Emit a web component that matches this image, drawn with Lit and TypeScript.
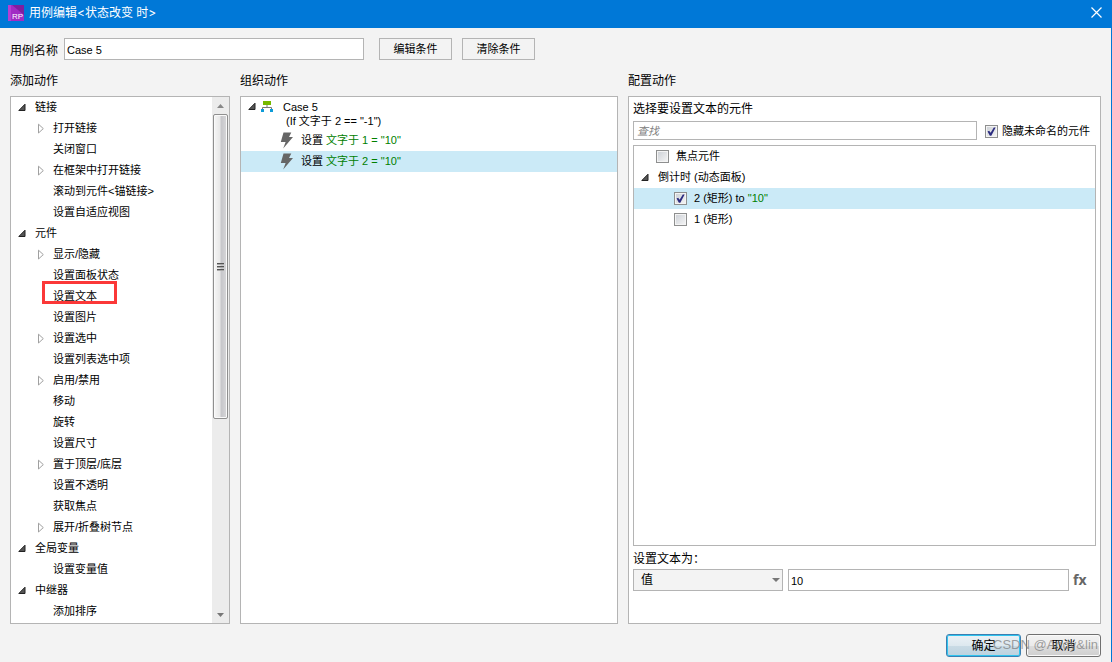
import { LitElement, html, css, svg, nothing } from "lit";
import { customElement, property, state } from "lit/decorators.js";
import { classMap } from "lit/directives/class-map.js";

type ActionNode = {
  label: string;
  level: 0 | 1;
  twisty?: "open" | "closed";
  marked?: boolean;
};

const ACTIONS: ActionNode[] = [
  { label: "链接", level: 0, twisty: "open" },
  { label: "打开链接", level: 1, twisty: "closed" },
  { label: "关闭窗口", level: 1 },
  { label: "在框架中打开链接", level: 1, twisty: "closed" },
  { label: "滚动到元件<锚链接>", level: 1 },
  { label: "设置自适应视图", level: 1 },
  { label: "元件", level: 0, twisty: "open" },
  { label: "显示/隐藏", level: 1, twisty: "closed" },
  { label: "设置面板状态", level: 1 },
  { label: "设置文本", level: 1, marked: true },
  { label: "设置图片", level: 1 },
  { label: "设置选中", level: 1, twisty: "closed" },
  { label: "设置列表选中项", level: 1 },
  { label: "启用/禁用", level: 1, twisty: "closed" },
  { label: "移动", level: 1 },
  { label: "旋转", level: 1 },
  { label: "设置尺寸", level: 1 },
  { label: "置于顶层/底层", level: 1, twisty: "closed" },
  { label: "设置不透明", level: 1 },
  { label: "获取焦点", level: 1 },
  { label: "展开/折叠树节点", level: 1, twisty: "closed" },
  { label: "全局变量", level: 0, twisty: "open" },
  { label: "设置变量值", level: 1 },
  { label: "中继器", level: 0, twisty: "open" },
  { label: "添加排序", level: 1 },
];

const twistyIcon = (kind?: "open" | "closed") => html`
  <svg width="10" height="11" viewBox="0 0 10 11" aria-hidden="true">
    ${kind === "open"
      ? svg`<path d="M7 2.2V8.5H0.8Z" fill="#555" stroke="#222" stroke-width="1"/>`
      : kind === "closed"
        ? svg`<path d="M2.5 1.2V10L7.3 5.6Z" fill="#fff" stroke="#a0a0a0" stroke-width="1"/>`
        : nothing}
  </svg>`;

const boltIcon = html`
  <svg width="14" height="17" viewBox="0 0 14 17" aria-hidden="true">
    <path d="M3.5 0.5H11.3L9 5H13L3.2 16.5L5.6 10H0.8Z" fill="#666" />
  </svg>`;

const caseIcon = html`
  <svg width="12" height="12" viewBox="0 0 12 12" aria-hidden="true">
    <path d="M2 0H10V4H2Z" fill="#76b900" />
    <path d="M6 4V6M1.5 8V6.5H10.5V8" fill="none" stroke="#777" />
    <path d="M0 8H3V11H0ZM9 8H12V11H9Z" fill="#0c9bd8" />
  </svg>`;

const base = css`
  :host {
    display: block;
    font: 11px/21px "Liberation Sans", "Noto Sans CJK SC", sans-serif;
    color: #000;
  }
  *,
  *::before {
    box-sizing: border-box;
  }
  svg {
    display: block;
    flex: none;
  }
  ul {
    list-style: none;
    margin: 0;
    padding: 0;
  }
  input,
  select,
  button {
    font: inherit;
    color: inherit;
    margin: 0;
    border-radius: 0;
  }
  .field {
    border: 1px solid #b4b4b4;
    background: #fff;
    padding: 1px 2px 0;
    min-width: 0;
    height: 22px;
    line-height: 19px;
    outline: none;
  }
  .selected {
    background: #cbeaf7;
  }
  .value {
    color: #008000;
  }
`;

@customElement("action-tree")
class ActionTree extends LitElement {
  static styles = [
    base,
    css`
      :host {
        display: flex;
        flex: 1;
        min-height: 0;
      }
      .tree {
        flex: 1;
        min-width: 0;
        overflow: hidden;
      }
      .node {
        position: relative;
        display: flex;
        align-items: center;
        gap: 7px;
        height: 21px;
        padding-left: 7px;
        white-space: nowrap;
      }
      .child {
        padding-left: 25px;
      }
      .mark {
        position: absolute;
        left: 31px;
        top: -5px;
        width: 75px;
        height: 23px;
        border: 3px solid #fb3838;
      }
      .bar {
        display: flex;
        flex-direction: column;
        align-items: center;
        width: 17px;
        padding-right: 1px;
        background: #ececec;
      }
      .arrow {
        display: grid;
        place-items: center;
        height: 17px;
      }
      .track {
        flex: 1;
        width: 100%;
      }
      .thumb {
        display: flex;
        align-items: center;
        justify-content: center;
        height: 62%;
        margin: 0 0 0 1px;
        border: 1px solid #8f8f8f;
        border-radius: 2px;
        background: linear-gradient(90deg, #f6f6f6, #e8e8e8 45%, #c6c6ca 55%, #d8d8da);
        box-shadow: inset 0 0 0 1px #fafafa;
      }
    `,
  ];

  render() {
    return html`
      <ul class="tree" role="tree" aria-label="添加动作">
        ${ACTIONS.map(
          (n) => html`<li
            class=${classMap({ node: true, child: n.level === 1 })}
            role="treeitem"
            aria-level=${n.level + 1}
            aria-expanded=${n.twisty ? String(n.twisty === "open") : nothing}
          >
            ${twistyIcon(n.twisty)}<span>${n.label}</span>
            ${n.marked ? html`<span class="mark"></span>` : nothing}
          </li>`
        )}
      </ul>
      <div class="bar" aria-hidden="true">
        <div class="arrow">
          <svg width="7" height="4" viewBox="0 0 7 4"><path d="M0 4L3.5 0L7 4Z" fill="#888" /></svg>
        </div>
        <div class="track">
          <div class="thumb">
            <svg width="7" height="8" viewBox="0 0 7 8">
              <path d="M0 0.5H7M0 3.5H7M0 6.5H7" stroke="#555" />
              <path d="M0 1.5H7M0 4.5H7M0 7.5H7" stroke="#aaa" />
            </svg>
          </div>
        </div>
        <div class="arrow">
          <svg width="7" height="4" viewBox="0 0 7 4"><path d="M0 0L3.5 4L7 0Z" fill="#777" /></svg>
        </div>
      </div>
    `;
  }
}

@customElement("case-outline")
class CaseOutline extends LitElement {
  @state() private selected = 1;

  static styles = [
    base,
    css`
      .case {
        display: flex;
        padding: 3px 0 2px 7px;
        line-height: 14px;
      }
      .case svg {
        margin-top: 1px;
      }
      .case svg + svg {
        margin: 1px 10px 0 3px;
      }
      .condition {
        padding-left: 3px;
      }
      .step {
        display: flex;
        align-items: center;
        gap: 7px;
        height: 21px;
        padding-left: 39px;
        white-space: nowrap;
      }
    `,
  ];

  render() {
    const steps = ['文字于 1 = "10"', '文字于 2 = "10"'];
    return html`
      <div class="case">
        ${twistyIcon("open")}${caseIcon}
        <div>
          <div>Case 5</div>
          <div class="condition">(If 文字于 2 == "-1")</div>
        </div>
      </div>
      <ul role="listbox" aria-label="组织动作">
        ${steps.map(
          (s, i) => html`<li
            class=${classMap({ step: true, selected: i === this.selected })}
            role="option"
            aria-selected=${String(i === this.selected)}
            @click=${() => (this.selected = i)}
          >
            ${boltIcon}<span>设置 <span class="value">${s}</span></span>
          </li>`
        )}
      </ul>
    `;
  }
}

@customElement("check-item")
class CheckItem extends LitElement {
  @property({ type: Boolean }) checked = false;

  static styles = [
    base,
    css`
      label {
        display: flex;
        align-items: center;
        gap: var(--check-gap, 7px);
        height: 21px;
        white-space: nowrap;
      }
      .box {
        appearance: none;
        display: grid;
        place-items: center;
        flex: none;
        width: 13px;
        height: 13px;
        border: 1px solid #8e8f8f;
        background: linear-gradient(135deg, #cbcfd5, #f6f6f6);
        box-shadow: inset 0 0 0 1px #f4f4f4;
      }
      .box:checked::before {
        content: "";
        width: 9px;
        height: 9px;
        background: #2c2c80;
        clip-path: polygon(6% 50%, 24% 42%, 40% 64%, 76% 6%, 96% 6%, 48% 96%, 32% 96%);
      }
    `,
  ];

  render() {
    return html`<label
      ><input class="box" type="checkbox" .checked=${this.checked} /><span><slot></slot></span
    ></label>`;
  }
}

@customElement("config-panel")
class ConfigPanel extends LitElement {
  static styles = [
    base,
    css`
      :host {
        display: flex;
        flex: 1;
        flex-direction: column;
        min-width: 0;
        padding: 4px 4px 32px;
      }
      .caption {
        font-size: 12px;
        line-height: 16px;
      }
      .search {
        display: flex;
        align-items: flex-start;
        gap: 8px;
        height: 21px;
        margin: 4px 0 3px;
        padding-right: 6px;
        --check-gap: 4px;
      }
      .search .field {
        flex: 1;
        height: 19px;
        line-height: 17px;
        padding: 0 3px;
      }
      .search .field::placeholder {
        color: #808080;
        font-style: italic;
        opacity: 1;
      }
      .list {
        flex: 1;
        border: 1px solid #b4b4b4;
      }
      .row {
        display: flex;
        align-items: center;
        height: 21px;
        white-space: nowrap;
      }
      .focus {
        padding-left: 22px;
      }
      .group {
        gap: 7px;
        padding-left: 7px;
      }
      .leaf {
        padding-left: 40px;
      }
      .target {
        margin: 5px 0 2px;
      }
      .editor {
        display: flex;
        align-items: center;
      }
      .drop {
        display: grid;
        align-items: center;
        margin-right: 5px;
      }
      .drop > * {
        grid-area: 1 / 1;
      }
      .pick {
        appearance: none;
        width: 150px;
        height: 22px;
        padding: 0 7px;
        border: 1px solid #b4b4b4;
        font-size: 12px;
        line-height: 20px;
        background: #f3f3f3;
      }
      .drop svg {
        justify-self: end;
        margin-right: 3px;
        pointer-events: none;
      }
      .editor .field {
        flex: 1;
      }
      .fx {
        width: 27px;
        padding: 0 0 0 4px;
        border: 0;
        background: none;
        color: #666;
        font: bold 14px/20px "Open Sans", sans-serif;
        text-align: left;
      }
    `,
  ];

  render() {
    return html`
      <div class="caption">选择要设置文本的元件</div>
      <div class="search">
        <input class="field" type="text" placeholder="查找" aria-label="查找" />
        <check-item checked>隐藏未命名的元件</check-item>
      </div>
      <ul class="list">
        <li class="row focus"><check-item>焦点元件</check-item></li>
        <li class="row group">${twistyIcon("open")}<span>倒计时 (动态面板)</span></li>
        <li class="row leaf selected">
          <check-item checked>2 (矩形) to <span class="value">"10"</span></check-item>
        </li>
        <li class="row leaf"><check-item>1 (矩形)</check-item></li>
      </ul>
      <label class="caption target" for="kind">设置文本为：</label>
      <div class="editor">
        <div class="drop">
          <select class="pick" id="kind">
            <option>值</option>
          </select>
          <svg width="8" height="4" viewBox="0 0 8 4" aria-hidden="true">
            <path d="M0 0H8L4 4Z" fill="#777" />
          </svg>
        </div>
        <input class="field" type="text" value="10" aria-label="值" />
        <button class="fx" type="button">fx</button>
      </div>
    `;
  }
}

@customElement("app-root")
class AppRoot extends LitElement {
  static styles = [
    base,
    css`
      :host {
        position: relative;
        display: flex;
        flex-direction: column;
        min-height: 100vh;
        background: #f3f3f3;
        font-size: 12px;
        line-height: 16px;
      }
      .title {
        display: flex;
        align-items: center;
        gap: 5px;
        height: 28px;
        padding: 0 10px 3px 8px;
        background: #0078d7;
        color: #fff;
      }
      .title h1 {
        flex: 1;
        margin: 0;
        font: 12px/16px Inter, "Noto Sans CJK SC", sans-serif;
      }
      .close {
        padding: 0;
        border: 0;
        background: none;
      }
      .body {
        display: flex;
        flex: 1;
        flex-direction: column;
        padding: 10px 10px 5px;
        border-right: 1px solid #0078d7;
      }
      .name {
        display: flex;
        align-items: center;
      }
      .name label {
        margin-right: 6px;
        padding-top: 3px;
      }
      .name .field {
        width: 300px;
        margin-right: 15px;
        font-size: 11px;
      }
      .flat {
        width: 73px;
        height: 22px;
        margin-right: 10px;
        padding: 0;
        border: 1px solid #b4b4b4;
        background: #f3f3f3;
        font-size: 11px;
        line-height: 20px;
      }
      .columns {
        display: grid;
        grid-template-columns: 220px minmax(0, 378fr) minmax(0, 473fr);
        gap: 10px;
        flex: 1;
      }
      .column {
        display: flex;
        flex-direction: column;
      }
      .column h2 {
        margin: 13px 0 7px;
        font: inherit;
      }
      .panel {
        display: flex;
        flex: 1;
        flex-direction: column;
        border: 1px solid #b4b4b4;
        background: #fff;
      }
      .footer {
        display: flex;
        justify-content: flex-end;
        gap: 5px;
        padding-top: 10px;
      }
      .push {
        width: 75px;
        height: 23px;
        padding: 0;
        border: 1px solid #707070;
        border-radius: 3px;
        background: linear-gradient(#f2f2f2, #ebebeb 50%, #dddddd 50%, #cfcfcf);
        box-shadow: inset 0 0 0 1px #fafafa;
      }
      .primary {
        border-color: #3c7fb1;
        background: linear-gradient(#ecf2f6, #dde8ef 50%, #cadbe5 50%, #bcd2df);
        box-shadow: inset 0 0 0 1px #2fc4ef;
      }
      .watermark {
        position: absolute;
        right: 14px;
        bottom: 9px;
        font-size: 13px;
        color: rgba(120, 120, 120, 0.7);
        pointer-events: none;
      }
    `,
  ];

  render() {
    return html`
      <header class="title">
        <svg width="16" height="16" viewBox="0 0 16 16" aria-hidden="true">
          <path d="M0 0H16V16H0Z" fill="#a12cc4" />
          <path d="M4 0H16V10Z" fill="#7f1f9f" />
          <path d="M0 0H3V16H0Z" fill="#b53fd2" />
          <text x="4" y="14" font-size="8" fill="#fff" font-family="Liberation Sans">RP</text>
        </svg>
        <h1>用例编辑&lt;状态改变 时&gt;</h1>
        <button class="close" type="button" aria-label="关闭">
          <svg width="11" height="11" viewBox="0 0 11 11">
            <path d="M0.5 0.5L10.5 10.5M10.5 0.5L0.5 10.5" stroke="#fff" stroke-width="1.2" />
          </svg>
        </button>
      </header>
      <main class="body">
        <div class="name">
          <label for="case-name">用例名称</label>
          <input class="field" id="case-name" type="text" value="Case 5" />
          <button class="flat" type="button">编辑条件</button>
          <button class="flat" type="button">清除条件</button>
        </div>
        <div class="columns">
          <section class="column">
            <h2>添加动作</h2>
            <div class="panel"><action-tree></action-tree></div>
          </section>
          <section class="column">
            <h2>组织动作</h2>
            <div class="panel"><case-outline></case-outline></div>
          </section>
          <section class="column">
            <h2>配置动作</h2>
            <div class="panel"><config-panel></config-panel></div>
          </section>
        </div>
        <div class="footer">
          <button class="push primary" type="button">确定</button>
          <button class="push" type="button">取消</button>
        </div>
      </main>
      <span class="watermark">CSDN @Andy&amp;lin</span>
    `;
  }
}
